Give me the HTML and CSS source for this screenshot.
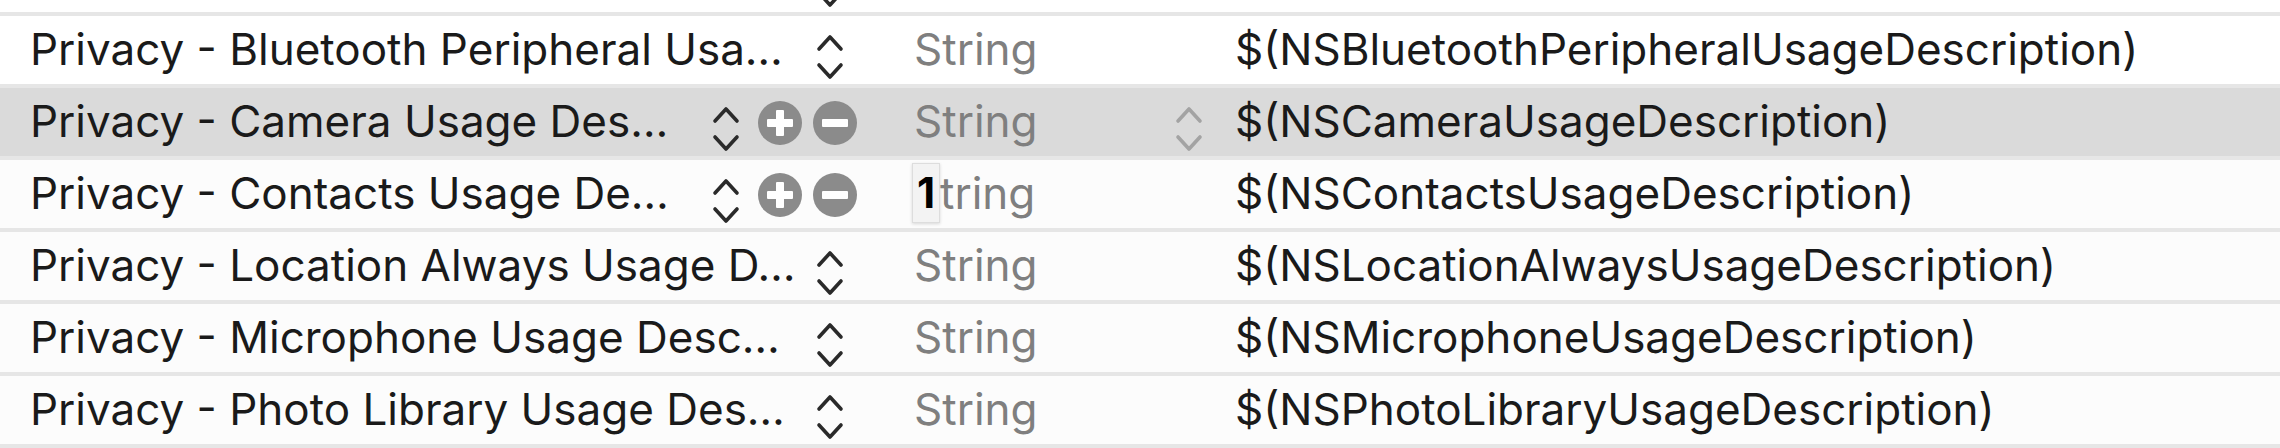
FILE: index.html
```html
<!DOCTYPE html>
<html>
<head>
<meta charset="utf-8">
<link rel="stylesheet" href="styles.css">
</head>
<body>
<div class="table">
  <div class="row partial">
    <div class="key"><span class="key-text"></span><svg class="chev" viewBox="0 0 28 50"><polyline points="3,17 14,5 25,17"/><polyline points="3,33 14,45 25,33"/></svg></div>
    <div class="type"></div>
    <div class="value"></div>
  </div>
  <div class="row">
    <div class="key"><span class="key-text">Privacy - Bluetooth Peripheral Usa…</span><svg class="chev" viewBox="0 0 28 50"><polyline points="3,17 14,5 25,17"/><polyline points="3,33 14,45 25,33"/></svg></div>
    <div class="type"><span class="type-text">String</span></div>
    <div class="value">$(NSBluetoothPeripheralUsageDescription)</div>
  </div>
  <div class="row selected">
    <div class="key hover"><span class="key-text">Privacy - Camera Usage Des…</span><svg class="chev" viewBox="0 0 28 50"><polyline points="3,17 14,5 25,17"/><polyline points="3,33 14,45 25,33"/></svg><span class="btn plus"></span><span class="btn minus"></span></div>
    <div class="type"><span class="type-text">String</span><svg class="chev light" viewBox="0 0 28 50"><polyline points="3,17 14,5 25,17"/><polyline points="3,33 14,45 25,33"/></svg></div>
    <div class="value">$(NSCameraUsageDescription)</div>
  </div>
  <div class="row alt">
    <div class="key hover"><span class="key-text">Privacy - Contacts Usage De…</span><svg class="chev" viewBox="0 0 28 50"><polyline points="3,17 14,5 25,17"/><polyline points="3,33 14,45 25,33"/></svg><span class="btn plus"></span><span class="btn minus"></span></div>
    <div class="type"><span class="type-text"><span class="keycap">1</span>tring</span></div>
    <div class="value">$(NSContactsUsageDescription)</div>
  </div>
  <div class="row alt">
    <div class="key"><span class="key-text">Privacy - Location Always Usage D…</span><svg class="chev" viewBox="0 0 28 50"><polyline points="3,17 14,5 25,17"/><polyline points="3,33 14,45 25,33"/></svg></div>
    <div class="type"><span class="type-text">String</span></div>
    <div class="value">$(NSLocationAlwaysUsageDescription)</div>
  </div>
  <div class="row alt">
    <div class="key"><span class="key-text">Privacy - Microphone Usage Desc…</span><svg class="chev" viewBox="0 0 28 50"><polyline points="3,17 14,5 25,17"/><polyline points="3,33 14,45 25,33"/></svg></div>
    <div class="type"><span class="type-text">String</span></div>
    <div class="value">$(NSMicrophoneUsageDescription)</div>
  </div>
  <div class="row alt">
    <div class="key"><span class="key-text">Privacy - Photo Library Usage Des…</span><svg class="chev" viewBox="0 0 28 50"><polyline points="3,17 14,5 25,17"/><polyline points="3,33 14,45 25,33"/></svg></div>
    <div class="type"><span class="type-text">String</span></div>
    <div class="value">$(NSPhotoLibraryUsageDescription)</div>
  </div>
</div>
</body>
</html>
```

FILE: styles.css
```css
html, body {
  margin: 0;
  padding: 0;
  background: #ffffff;
  overflow: hidden;
}
body {
  width: 2280px;
  height: 448px;
  font-family: Inter, "Liberation Sans", Arial, sans-serif;
  font-size: 44px;
  color: #1a1a1a;
}
.table {
  margin-top: -56px;
}
.row {
  display: grid;
  grid-template-columns: 870px 355px 1fr;
  height: 68px;
  border-bottom: 4px solid #e6e6e6;
  background: #ffffff;
}
.row.alt {
  background: #fcfcfc;
}
.row.selected {
  background: #dadada;
}
.key, .type, .value {
  display: flex;
  align-items: center;
  white-space: nowrap;
  overflow: hidden;
}
.key {
  padding-left: 30px;
  padding-right: 13px;
}
.key-text {
  flex: 1;
  padding-bottom: 2px;
}
.chev {
  width: 28px;
  height: 50px;
  margin-top: 14px;
  margin-right: 13px;
  flex: none;
}
.chev polyline {
  fill: none;
  stroke: #2a2a2a;
  stroke-width: 3.6;
  stroke-linecap: round;
  stroke-linejoin: round;
}
.chev.light polyline {
  stroke: #a3a3a3;
}
.key.hover .chev {
  margin-right: 18px;
}
.btn {
  position: relative;
  width: 44px;
  height: 44px;
  border-radius: 50%;
  background: #8b8b8b;
  flex: none;
  margin-top: 2px;
}
.btn.plus {
  margin-right: 11px;
}
.btn::before, .plus::after {
  content: "";
  position: absolute;
  background: #ffffff;
  left: 9px;
  top: 18px;
  width: 26px;
  height: 8px;
  border-radius: 1px;
}
.plus::after {
  left: 18px;
  top: 9px;
  width: 8px;
  height: 26px;
}
.type {
  padding-left: 44px;
  padding-right: 22px;
  justify-content: space-between;
  color: #7f7f7f;
}
.type .chev {
  margin-right: 0;
}
.type-text {
  display: flex;
  align-items: center;
  padding-bottom: 2px;
}
.keycap {
  display: inline-block;
  width: 28px;
  height: 60px;
  margin-left: -2px;
  margin-right: 0;
  box-sizing: border-box;
  background: #f3f3f3;
  border: 1px solid #dddddd;
  box-shadow: 0 1px 3px rgba(0,0,0,0.15);
  color: #000000;
  font-weight: 700;
  font-size: 42px;
  line-height: 58px;
  text-align: center;
}
.value {
  padding-left: 10px;
  padding-bottom: 2px;
}
```
